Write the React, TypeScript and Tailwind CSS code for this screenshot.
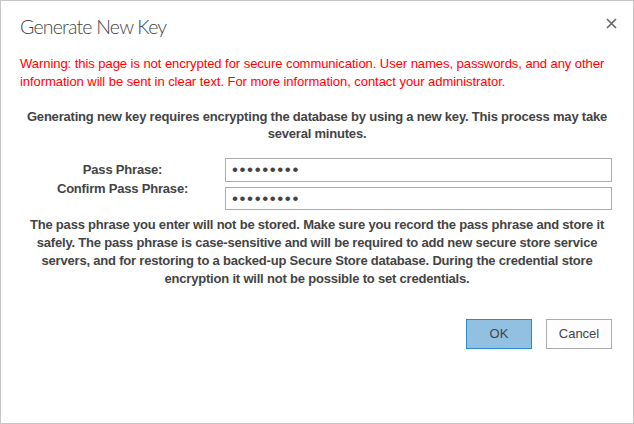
import { useState } from "react";

const CloseIcon = () => (
  <svg width="11" height="11" viewBox="0 0 11 11" aria-hidden="true">
    <path d="M1 1 L10 10 M10 1 L1 10" stroke="#666" strokeWidth="1.6" />
  </svg>
);

export default function App() {
  const [phrase, setPhrase] = useState("123456789");
  const [confirm, setConfirm] = useState("123456789");

  return (
    <div className="w-[634px] h-[424px] bg-white border border-[#c6c6c6] text-[#444] font-['Segoe_UI','Liberation_Sans',sans-serif] flex flex-col">
      {/* header */}
      <div className="flex items-start justify-between pl-[19px] pr-[15px] pt-[12px]">
        <h1 className="text-[19.5px] leading-[28px] font-light tracking-[-0.8px] text-[#444] font-['Lato',sans-serif]">
          Generate New Key
        </h1>
        <button className="mt-[4px] p-[1px]" aria-label="Close">
          <CloseIcon />
        </button>
      </div>

      <p className="mt-[14px] px-[19px] text-[13px] leading-[18px] text-[#f00] tracking-[-0.05px]">
        Warning: this page is not encrypted for secure communication. User names, passwords, and any other information
        will be sent in clear text. For more information, contact your administrator.
      </p>

      <p className="mt-[17px] px-[20px] text-center text-[13px] leading-[17px] font-bold tracking-[-0.2px]">
        Generating new key requires encrypting the database by using a new key. This process may take several minutes.
      </p>

      {/* pass phrase fields */}
      <div className="mt-[16px] grid grid-cols-[205px_1fr] gap-y-[5px] pl-[19px] pr-[21px]">
        <label className="text-center text-[13px] leading-[23px] font-bold tracking-[-0.2px]">Pass Phrase:</label>
        <input
          type="password"
          value={phrase}
          onChange={(e) => setPhrase(e.target.value)}
          className="h-[24px] border border-[#ababab] px-[6px] text-[17px] tracking-[1.6px] text-[#444] outline-none"
        />
        <label className="-mt-[7px] text-center text-[13px] leading-[17px] font-bold tracking-[-0.2px]">
          Confirm Pass Phrase:
        </label>
        <input
          type="password"
          value={confirm}
          onChange={(e) => setConfirm(e.target.value)}
          className="h-[23px] border border-[#ababab] px-[6px] text-[17px] tracking-[1.6px] text-[#444] outline-none"
        />
      </div>

      <p className="mt-[6px] px-[20px] text-center text-[13px] leading-[18px] font-bold tracking-[-0.2px]">
        The pass phrase you enter will not be stored. Make sure you record the pass phrase and store it safely. The pass
        phrase is case-sensitive and will be required to add new secure store service servers, and for restoring to a
        backed-up Secure Store database. During the credential store encryption it will not be possible to set
        credentials.
      </p>

      <div className="mt-[31px] flex justify-end gap-[14px] pr-[21px]">
        <button className="w-[66px] h-[30px] bg-[#92c0e0] border border-[#2a8dd4] text-[13px] text-[#444]">OK</button>
        <button className="w-[66px] h-[30px] bg-[#fdfdfd] border border-[#ababab] text-[13px] text-[#444]">Cancel</button>
      </div>
    </div>
  );
}
